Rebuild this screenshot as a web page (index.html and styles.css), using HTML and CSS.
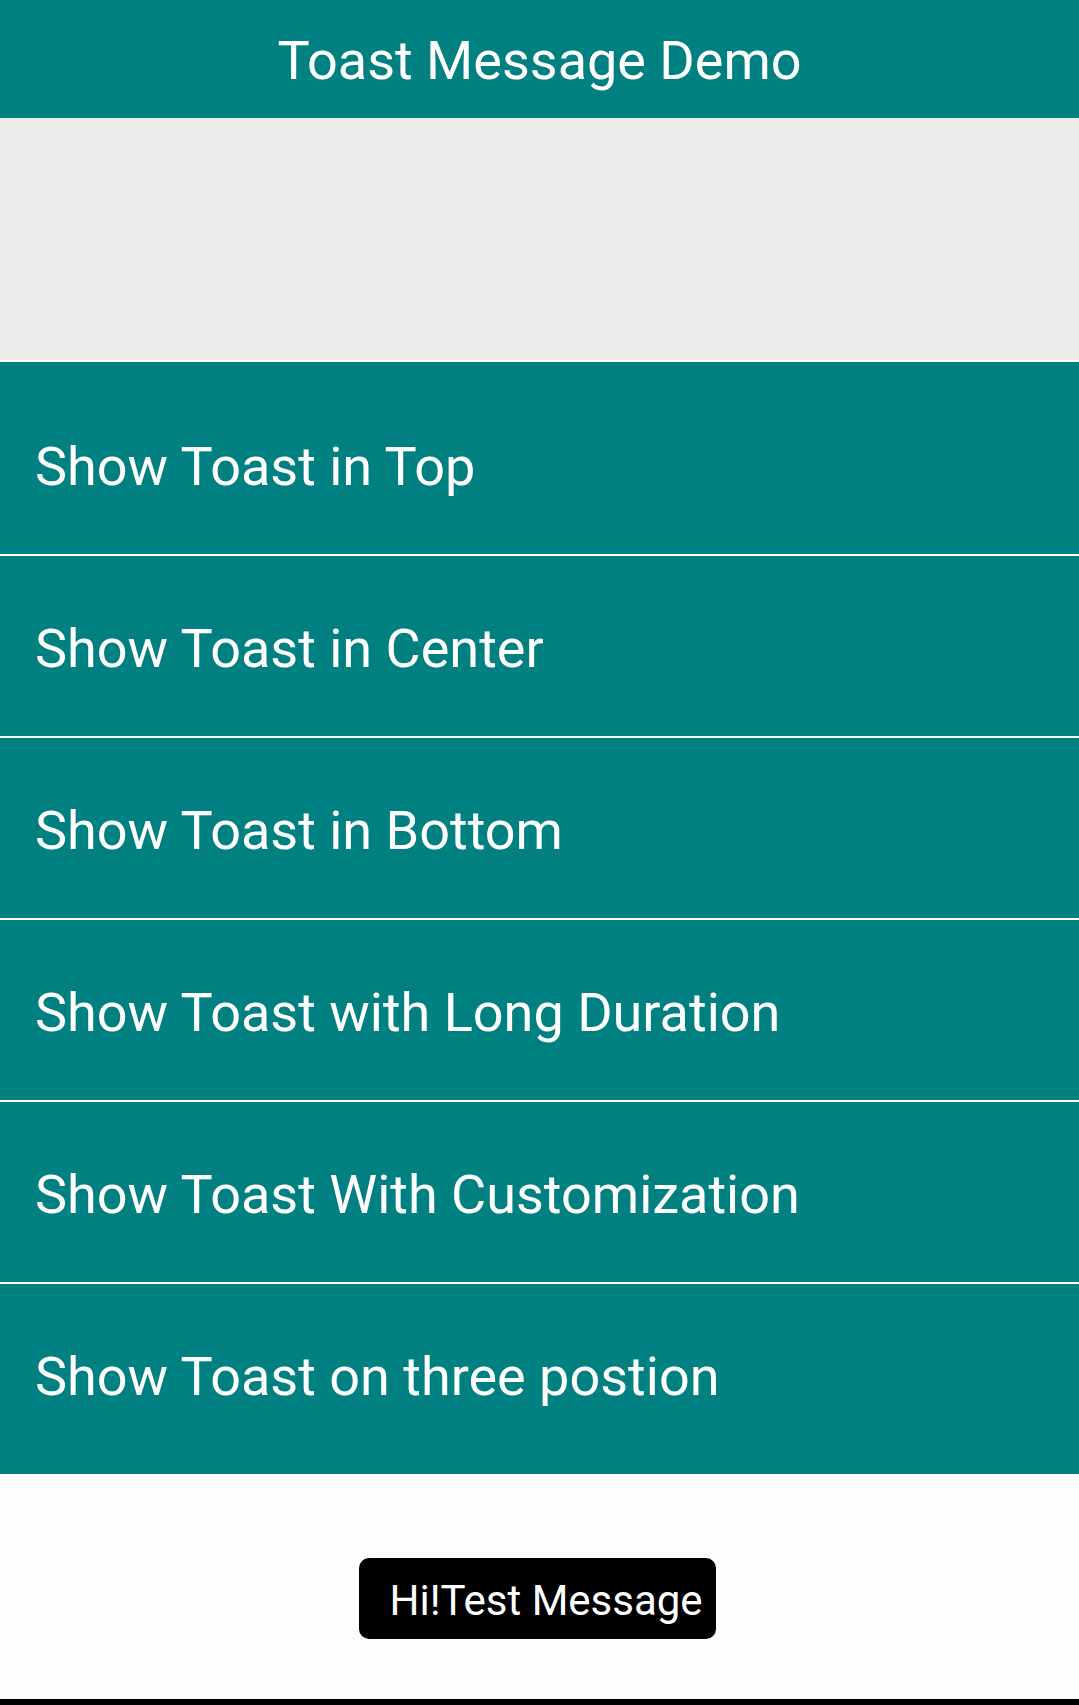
FILE: index.html
```html
<!DOCTYPE html>
<html>
<head>
<meta charset="utf-8">
<link rel="stylesheet" href="styles.css">
</head>
<body>
<div class="app">
  <header class="appbar"><span class="title">Toast Message Demo</span></header>
  <div class="spacer"></div>
  <div class="buttons">
    <div class="btn">Show Toast in Top</div>
    <div class="btn">Show Toast in Center</div>
    <div class="btn">Show Toast in Bottom</div>
    <div class="btn">Show Toast with Long Duration</div>
    <div class="btn">Show Toast With Customization</div>
    <div class="btn">Show Toast on three postion</div>
  </div>
  <div class="footer">
    <div class="toast">Hi!Test Message</div>
  </div>
  <div class="navbar"></div>
</div>
</body>
</html>
```
FILE: styles.css
```css
html, body {
  margin: 0;
  padding: 0;
}
body {
  font-family: Roboto, "Noto Sans", sans-serif;
  background: #fdfdfd;
}
.app {
  width: 1079px;
  height: 1705px;
  display: flex;
  flex-direction: column;
  overflow: hidden;
}
.appbar {
  height: 118px;
  flex: none;
  background: #008080;
  color: #ffffff;
  display: flex;
  align-items: center;
  justify-content: center;
  box-sizing: border-box;
  padding-top: 3px;
}
.title {
  font-size: 54px;
  line-height: normal;
  font-weight: 400;
}
.spacer {
  height: 242px;
  flex: none;
  background: #ececec;
  border-bottom: 2px solid #ffffff;
}
.buttons {
  flex: none;
  background: #008080;
  padding: 12px 0 10px;
  display: flex;
  flex-direction: column;
  gap: 2px;
}
.btn {
  height: 180px;
  box-sizing: border-box;
  display: flex;
  align-items: center;
  padding: 4px 0 0 35px;
  color: #ffffff;
  font-size: 54px;
  line-height: normal;
  background: #008080;
  box-shadow: 0 2px 0 #ffffff;
}
.btn:last-child {
  box-shadow: none;
}
.footer {
  flex: none;
  height: 225px;
  background: #fdfdfd;
  display: flex;
  justify-content: center;
  align-items: flex-start;
  box-sizing: border-box;
  padding: 84px 0 0 0;
}
.toast {
  width: 357px;
  height: 81px;
  box-sizing: border-box;
  background: #000000;
  color: #ffffff;
  border-radius: 10px;
  font-size: 42px;
  line-height: normal;
  white-space: nowrap;
  overflow: hidden;
  display: flex;
  align-items: center;
  padding: 4px 0 0 31px;
  margin-left: -5px;
}
.navbar {
  flex: none;
  height: 6px;
  background: #000000;
}
```
